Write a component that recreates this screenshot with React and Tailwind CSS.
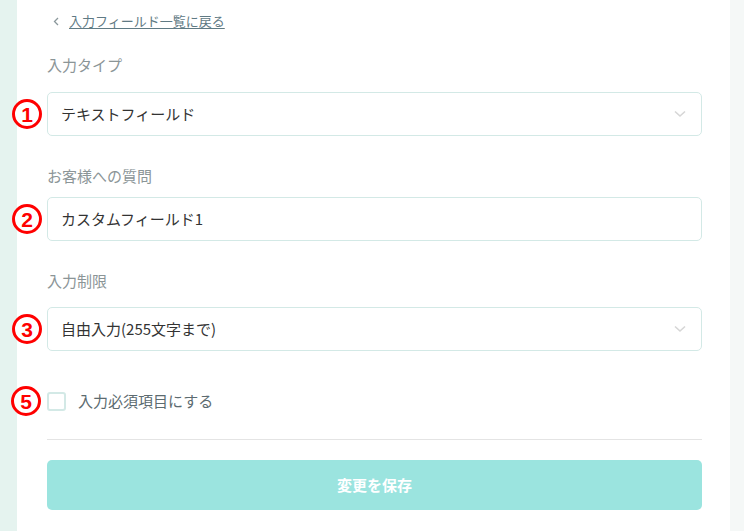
import React from 'react';

// --- Red circled annotation number ---
const Marker = ({ n }) => (
    <span className="absolute left-[-36px] top-1/2 -translate-y-1/2 w-[30px] h-[30px] rounded-full border-[3px] border-[#ff0000] flex items-center justify-center text-[#ff0000] text-[21px] font-bold leading-none bg-white" style={{ fontFamily: '"Liberation Sans", sans-serif' }}>
        {n}
    </span>
);

const Chevron = () => (
    <svg width="12" height="8" viewBox="0 0 12 8" className="absolute right-[15px] top-1/2 -translate-y-1/2">
        <polyline points="1,1.5 6,6 11,1.5" fill="none" stroke="#d6d6d6" strokeWidth="1.6" />
    </svg>
);

const Field = ({ n, value, select }) => (
    <div className="relative h-[44px] rounded-[5px] border border-[#d3e9e6] bg-white flex items-center pl-[13px] text-[15px] text-[#333]">
        <Marker n={n} />
        {value}
        {select && <Chevron />}
    </div>
);

const Label = ({ children, className = '' }) => (
    <div className={`h-[20px] leading-[20px] text-[15px] text-[#8b9597] ${className}`}>{children}</div>
);

export default function App() {
    return (
        <div className="w-[744px] h-[531px] flex bg-[#f5f8f7] overflow-hidden" style={{ fontFamily: '"Noto Sans CJK JP", "Noto Sans", sans-serif' }}>
            <div className="w-[17px] bg-[#e5f3ef]" />
            <div className="w-[713px] bg-white pl-[30px] pr-[28px]">
                {/* back link */}
                <div className="mt-[11px] h-[20px] flex items-center text-[13px] text-[#5f7a84]">
                    <svg width="6" height="9" viewBox="0 0 6 9" className="ml-[6px] mr-[10px]">
                        <polyline points="5,1 1.5,4.5 5,8" fill="none" stroke="#8a979b" strokeWidth="1.3" />
                    </svg>
                    <span className="underline underline-offset-2">入力フィールド一覧に戻る</span>
                </div>

                <Label className="mt-[24px]">入力タイプ</Label>
                <div className="mt-[17px]">
                    <Field n="1" value="テキストフィールド" select />
                </div>

                <Label className="mt-[30px]">お客様への質問</Label>
                <div className="mt-[11px]">
                    <Field n="2" value="カスタムフィールド1" />
                </div>

                <Label className="mt-[30px]">入力制限</Label>
                <div className="mt-[16px]">
                    <Field n="3" value="自由入力(255文字まで)" select />
                </div>

                {/* required checkbox */}
                <div className="relative mt-[40px] h-[20px] flex items-center">
                    <Marker n="5" />
                    <span className="w-[19px] h-[19px] rounded-[3px] border-2 border-[#d3e9e6] bg-white" />
                    <span className="ml-[12px] text-[15px] text-[#5c6b70]">入力必須項目にする</span>
                </div>

                <div className="mt-[28px] h-px bg-[#e4e4e4]" />

                <button type="button" className="mt-[20px] w-full h-[50px] rounded-[5px] bg-[#9be4df] text-white text-[15px] font-bold">
                    変更を保存
                </button>
            </div>
        </div>
    );
}
